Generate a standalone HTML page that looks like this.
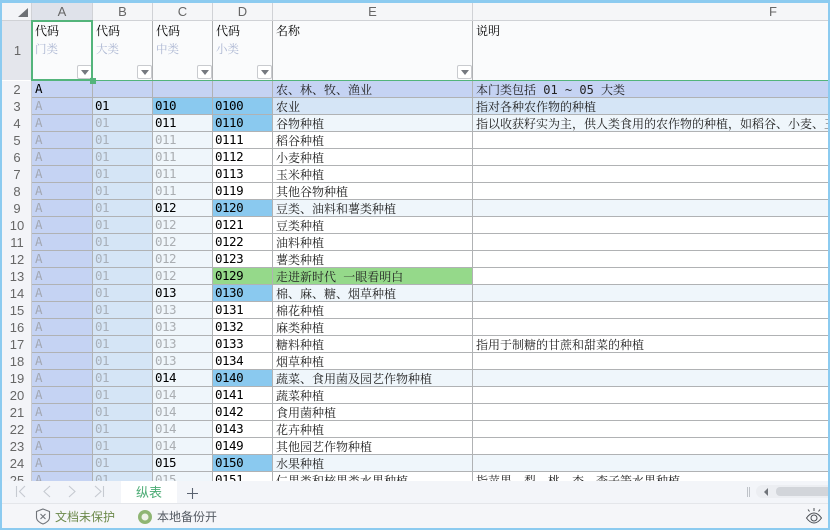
<!DOCTYPE html>
<html><head><meta charset="utf-8"><style>
html,body{margin:0;padding:0}
body{width:830px;height:530px;overflow:hidden;position:relative;background:#fff;font-family:"Liberation Sans","Noto Sans CJK SC",sans-serif}
#g{position:absolute;left:2px;top:81px;width:828px;height:400px;overflow:hidden}
.r{display:flex;height:17px}
.r>*{display:block;flex:none;box-sizing:border-box;height:17px;border-right:1px solid #b0b2b4;border-bottom:1px solid #b0b2b4;padding-left:2px;font-style:normal;white-space:nowrap;overflow:hidden;font:12.5px/16px "DejaVu Sans Mono","Noto Serif CJK SC",monospace;letter-spacing:-.5px;color:#000}
.r>b{width:30px;background:#f3f4f8;color:#666;font:13px/17px "Liberation Sans",sans-serif;letter-spacing:0;text-align:center;padding:0 0 0 1px;border-right:1px solid #c9cbcf;border-bottom:0}
.r>u{width:61px;padding-left:3px;text-decoration:none;background:#c5d3f3;color:#a2a7b2}
.r>s{width:60px;text-decoration:none;background:#d5e5f6;color:#a8b0ba}
.r>q{width:60px;quotes:none;background:#eff6fb;color:#aaaeb2}
.r>q:before,.r>q:after{content:none}
.r>a{width:60px;background:#fff}
.r>em{width:200px;padding-left:3px;font:12px/18px "DejaVu Sans Mono","Noto Serif CJK SC",serif;letter-spacing:0;color:#222;background:#fff}
.r>i{width:360px;padding-left:3px;font:12px/18px "DejaVu Sans Mono","Noto Serif CJK SC",serif;letter-spacing:0;color:#222;background:#fff;border-right:0}
.k{color:#000!important}
.r>a.h{background:#8ac9ef}
.r>a.n{background:#95d98a}
.r>em.n{background:#95d98a}
.l>em,.l>i{background:#eff6fb}
.t>u,.t>s,.t>q,.t>a,.t>em,.t>i{background:#c5d3f3}
.v>s,.v>em,.v>i{background:#d5e5f6}
.v>q.h{background:#8ac9ef}
.ab{position:absolute}
.ch{top:3px;height:18px;box-sizing:border-box;background:#f5f6f8;color:#666;font-size:13px;line-height:18px;text-align:center;border-right:1px solid #d0d2d6;border-bottom:1px solid #d0d2d6}
.hc{top:21px;height:59px;box-sizing:border-box;background:#fafbfc;border-right:1px solid #b0b2b4;padding:1px 0 0 3px;font:12px/18px "Noto Serif CJK SC",serif;color:#000}
.hc span{display:block;color:#abb6d2;line-height:18px;font-size:11.5px}
.fb{width:15px;height:14px;box-sizing:border-box;background:#fff;border:1px solid #c9cbcf;border-radius:2px;top:65px}
.fb:after{content:"";position:absolute;left:3px;top:4px;border:4px solid transparent;border-top:5px solid #75797f;border-bottom:0}
</style></head><body>
<div class="ab ch" style="left:2px;width:30px;background:#f3f4f7"></div>
<svg class="ab" style="left:18px;top:8px" width="11" height="9"><path d="M0 9L10 0V9Z" fill="#6d7075"/></svg>
<div class="ab ch" style="left:32px;width:61px;background:#dfe2ea">A</div>
<div class="ab ch" style="left:93px;width:60px">B</div>
<div class="ab ch" style="left:153px;width:60px">C</div>
<div class="ab ch" style="left:213px;width:60px">D</div>
<div class="ab ch" style="left:273px;width:200px">E</div>
<div class="ab ch" style="left:473px;width:357px;border-right:0;padding-left:296px;text-align:left">F</div>
<div class="ab" style="left:2px;top:21px;width:30px;height:59px;background:#e4e6ec;color:#666;font-size:13px;line-height:59px;text-align:center;padding-left:1px;box-sizing:border-box">1</div>
<div class="ab hc" style="left:32px;width:61px">代码<span>门类</span></div>
<div class="ab hc" style="left:93px;width:60px">代码<span>大类</span></div>
<div class="ab hc" style="left:153px;width:60px">代码<span>中类</span></div>
<div class="ab hc" style="left:213px;width:60px">代码<span>小类</span></div>
<div class="ab hc" style="left:273px;width:200px">名称</div>
<div class="ab hc" style="left:473px;width:357px;border-right:0">说明</div>
<div class="ab fb" style="left:77px"></div>
<div class="ab fb" style="left:137px"></div>
<div class="ab fb" style="left:197px"></div>
<div class="ab fb" style="left:257px"></div>
<div class="ab fb" style="left:457px"></div>
<div id="g">
<div class="r t"><b>2</b><u class="k">A</u><s></s><q></q><a></a><em>农、林、牧、渔业</em><i>本门类包括 01 ~ 05 大类</i></div>
<div class="r v"><b>3</b><u>A</u><s class="k">01</s><q class="h k">010</q><a class="h">0100</a><em>农业</em><i>指对各种农作物的种植</i></div>
<div class="r l"><b>4</b><u>A</u><s>01</s><q class="k">011</q><a class="h">0110</a><em>谷物种植</em><i>指以收获籽实为主，供人类食用的农作物的种植，如稻谷、小麦、玉米等农作物的种植</i></div>
<div class="r"><b>5</b><u>A</u><s>01</s><q>011</q><a>0111</a><em>稻谷种植</em><i></i></div>
<div class="r"><b>6</b><u>A</u><s>01</s><q>011</q><a>0112</a><em>小麦种植</em><i></i></div>
<div class="r"><b>7</b><u>A</u><s>01</s><q>011</q><a>0113</a><em>玉米种植</em><i></i></div>
<div class="r"><b>8</b><u>A</u><s>01</s><q>011</q><a>0119</a><em>其他谷物种植</em><i></i></div>
<div class="r l"><b>9</b><u>A</u><s>01</s><q class="k">012</q><a class="h">0120</a><em>豆类、油料和薯类种植</em><i></i></div>
<div class="r"><b>10</b><u>A</u><s>01</s><q>012</q><a>0121</a><em>豆类种植</em><i></i></div>
<div class="r"><b>11</b><u>A</u><s>01</s><q>012</q><a>0122</a><em>油料种植</em><i></i></div>
<div class="r"><b>12</b><u>A</u><s>01</s><q>012</q><a>0123</a><em>薯类种植</em><i></i></div>
<div class="r"><b>13</b><u>A</u><s>01</s><q>012</q><a class="n">0129</a><em class="n">走进新时代 一眼看明白</em><i></i></div>
<div class="r l"><b>14</b><u>A</u><s>01</s><q class="k">013</q><a class="h">0130</a><em>棉、麻、糖、烟草种植</em><i></i></div>
<div class="r"><b>15</b><u>A</u><s>01</s><q>013</q><a>0131</a><em>棉花种植</em><i></i></div>
<div class="r"><b>16</b><u>A</u><s>01</s><q>013</q><a>0132</a><em>麻类种植</em><i></i></div>
<div class="r"><b>17</b><u>A</u><s>01</s><q>013</q><a>0133</a><em>糖料种植</em><i>指用于制糖的甘蔗和甜菜的种植</i></div>
<div class="r"><b>18</b><u>A</u><s>01</s><q>013</q><a>0134</a><em>烟草种植</em><i></i></div>
<div class="r l"><b>19</b><u>A</u><s>01</s><q class="k">014</q><a class="h">0140</a><em>蔬菜、食用菌及园艺作物种植</em><i></i></div>
<div class="r"><b>20</b><u>A</u><s>01</s><q>014</q><a>0141</a><em>蔬菜种植</em><i></i></div>
<div class="r"><b>21</b><u>A</u><s>01</s><q>014</q><a>0142</a><em>食用菌种植</em><i></i></div>
<div class="r"><b>22</b><u>A</u><s>01</s><q>014</q><a>0143</a><em>花卉种植</em><i></i></div>
<div class="r"><b>23</b><u>A</u><s>01</s><q>014</q><a>0149</a><em>其他园艺作物种植</em><i></i></div>
<div class="r l"><b>24</b><u>A</u><s>01</s><q class="k">015</q><a class="h">0150</a><em>水果种植</em><i></i></div>
<div class="r"><b>25</b><u>A</u><s>01</s><q>015</q><a>0151</a><em>仁果类和核果类水果种植</em><i>指苹果、梨、桃、杏、李子等水果种植</i></div>
</div>
<div class="ab" style="left:32px;top:80px;width:798px;height:1px;background:#53b47b"></div>
<div class="ab" style="left:31px;top:20px;width:62px;height:61px;box-sizing:border-box;border:2px solid #53b47b"></div>
<div class="ab" style="left:90px;top:78px;width:6px;height:6px;background:#53b47b"></div>
<div class="ab" style="left:2px;top:481px;width:828px;height:23px;background:#f3f5f9;border-bottom:1px solid #e4e6ea;box-sizing:border-box"></div>
<div class="ab" style="left:2px;top:504px;width:828px;height:24px;background:#f5f6f9"></div>
<svg class="ab" style="left:0;top:480px" width="110" height="20" fill="none" stroke="#c6cad1" stroke-width="1.1"><path d="M16.500 6V17M25 6L19.500 11.500L25 17M50 6L44 11.500L50 17M69 6L75 11.500L69 17M95 6L101 11.500L95 17M103.500 6V17"/></svg>
<div class="ab" style="left:121px;top:481px;width:56px;height:22px;background:#fff;color:#4bab74;font-size:13px;line-height:23px;text-align:center">纵表</div>
<svg class="ab" style="left:186px;top:487px" width="13" height="13" stroke="#5a6270" stroke-width="1.1"><path d="M6.500 1V12M1 6.500H12"/></svg>
<svg class="ab" style="left:35px;top:508px" width="16" height="17" fill="none" stroke="#70747a" stroke-width="1.1"><path d="M8 1L14.500 3.500V9.500C14.500 12.500 11 15 8 16C5 15 1.500 12.500 1.500 9.500V3.500Z"/><path d="M5.500 6L10.500 11M10.500 6L5.500 11"/></svg>
<div class="ab" style="left:55px;top:509px;font-size:12px;line-height:16px;color:#6d8a4c">文档未保护</div>
<svg class="ab" style="left:138px;top:510px" width="14" height="14"><circle cx="7" cy="7" r="7" fill="#8fb573"/><circle cx="7" cy="7" r="3.500" fill="#eef2e8"/></svg>
<div class="ab" style="left:157px;top:509px;font-size:12px;line-height:16px;color:#555b63">本地备份开</div>
<div class="ab" style="left:747px;top:487px;width:3px;height:10px;border:solid #bfc3c9;border-width:0 1px;box-sizing:border-box"></div>
<div class="ab" style="left:756px;top:485px;width:74px;height:13px;background:#eceef2;border-radius:7px 0 0 7px"></div>
<div class="ab" style="left:764px;top:488px;border:4px solid transparent;border-right:4px solid #70747a;border-left:0"></div>
<div class="ab" style="left:776px;top:487px;width:54px;height:9px;background:#d2d5da;border-radius:4px 0 0 4px"></div>
<svg class="ab" style="left:805px;top:507px" width="18" height="17" fill="none" stroke="#4a4e54" stroke-width="1"><path d="M1.500 11C4 7.500 6.500 6 9 6C11.500 6 14 7.500 16.500 11C14 14.500 11.500 16 9 16C6.500 16 4 14.500 1.500 11Z"/><circle cx="9" cy="11" r="3"/><path d="M9 1V4M3 2.500L4.500 4.500M15 2.500L13.500 4.500"/></svg>
<div class="ab" style="left:0;top:0;width:830px;height:3px;background:#8ccbf0"></div>
<div class="ab" style="left:0;top:0;width:2px;height:530px;background:#8ccbf0"></div>
<div class="ab" style="right:0;top:0;width:2px;height:530px;background:#8ccbf0"></div>
<div class="ab" style="left:0;bottom:0;width:830px;height:2px;background:#8ccbf0"></div>
</body></html>
